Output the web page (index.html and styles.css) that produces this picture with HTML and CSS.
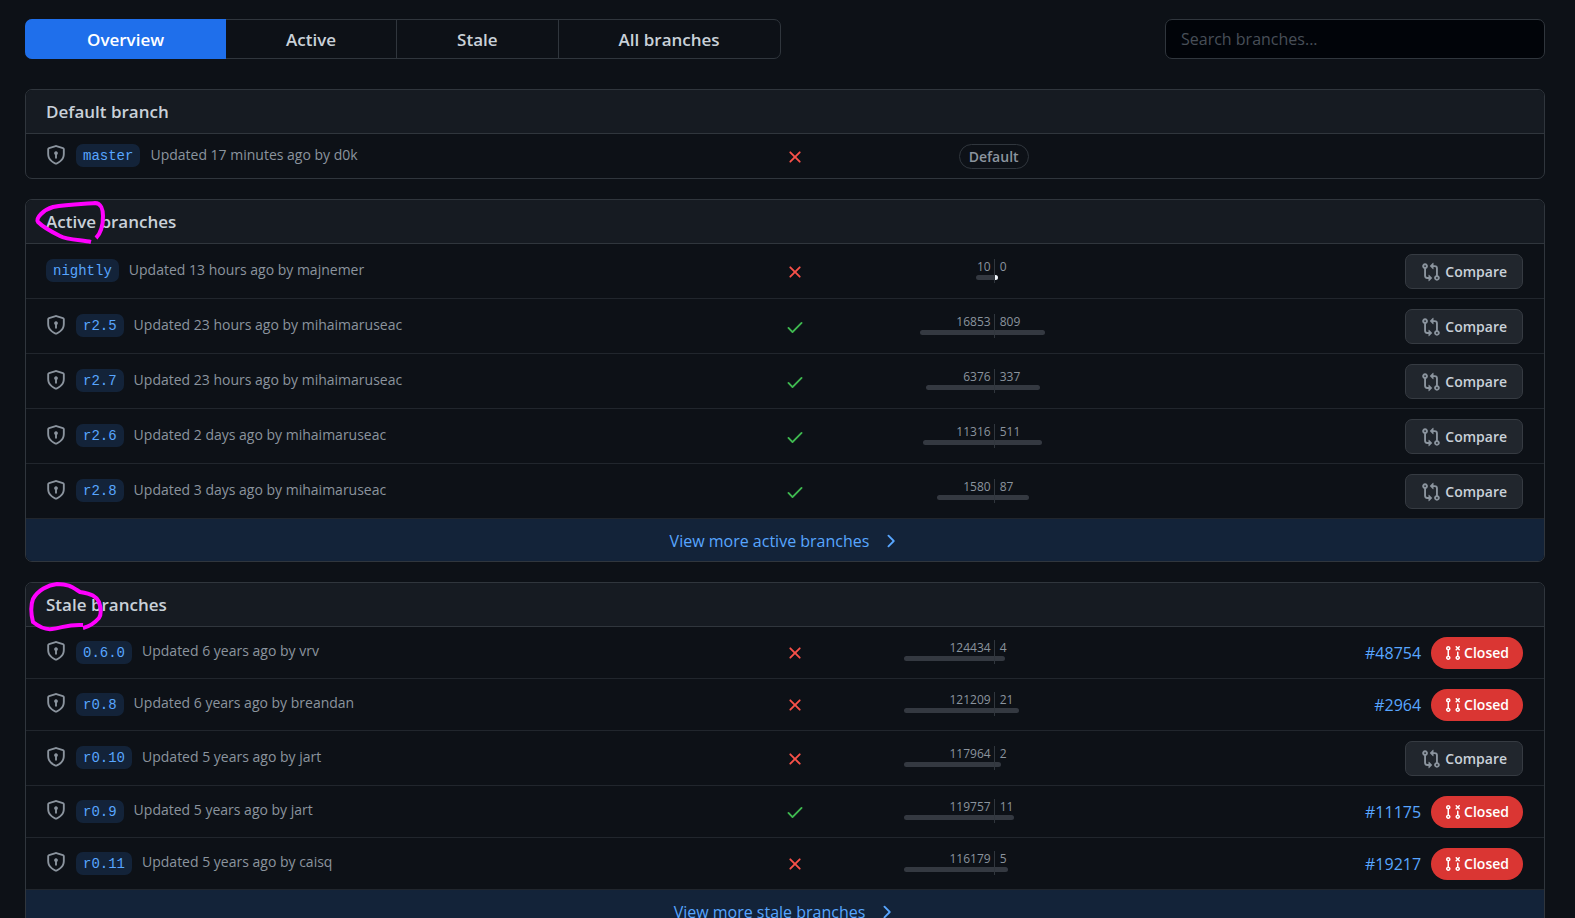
FILE: index.html
```html
<!DOCTYPE html>
<html lang="en">
<head>
  <meta charset="UTF-8">
  <meta name="viewport" content="width=device-width, initial-scale=1.0">
  <title>Branches</title>
  <link rel="stylesheet" href="styles.css">
</head>
<body>

  <!-- Icon sprite -->
  <svg class="sprite" aria-hidden="true">
    <symbol id="shield" viewBox="0 0 16 16"><path d="M7.467.133a1.75 1.75 0 011.066 0l5.25 1.68A1.75 1.75 0 0115 3.48V7c0 1.566-.32 3.182-1.303 4.682-.983 1.498-2.585 2.813-5.032 3.855a1.7 1.7 0 01-1.33 0c-2.447-1.042-4.049-2.357-5.032-3.855C1.32 10.182 1 8.566 1 7V3.48a1.75 1.75 0 011.217-1.667l5.25-1.68zm.61 1.429a.25.25 0 00-.153 0l-5.25 1.68a.25.25 0 00-.174.238V7c0 1.358.275 2.666 1.057 3.86.784 1.194 2.121 2.34 4.366 3.297a.2.2 0 00.154 0c2.245-.956 3.582-2.104 4.366-3.298C13.225 9.666 13.5 8.36 13.5 7V3.48a.25.25 0 00-.174-.237l-5.25-1.68zM9.5 6.5a1.5 1.5 0 01-.75 1.3v2.45a.75.75 0 01-1.5 0V7.8A1.5 1.5 0 119.5 6.5z"/></symbol>
    <symbol id="cross" viewBox="0 0 16 16"><path d="M3.72 3.72a.75.75 0 011.06 0L8 6.94l3.22-3.22a.75.75 0 111.06 1.06L9.06 8l3.22 3.22a.75.75 0 11-1.06 1.06L8 9.06l-3.22 3.22a.75.75 0 01-1.06-1.06L6.94 8 3.72 4.78a.75.75 0 010-1.06z"/></symbol>
    <symbol id="check" viewBox="0 0 16 16"><path d="M13.78 4.22a.75.75 0 010 1.06l-7.25 7.25a.75.75 0 01-1.06 0L2.22 9.28a.75.75 0 011.06-1.06L6 10.94l6.72-6.72a.75.75 0 011.06 0z"/></symbol>
    <symbol id="compare" viewBox="0 0 16 16"><path fill-rule="evenodd" d="M9.573.677L7.177 3.073a.25.25 0 000 .354l2.396 2.396A.25.25 0 0010 5.646V4h1a1 1 0 011 1v5.628a2.251 2.251 0 101.5 0V5A2.5 2.5 0 0011 2.5h-1V.854a.25.25 0 00-.427-.177zM6 12v-1.646a.25.25 0 01.427-.177l2.396 2.396a.25.25 0 010 .354l-2.396 2.396A.25.25 0 016 15.146V13.5H5A2.5 2.5 0 012.5 11V5.372a2.25 2.25 0 111.5 0V11a1 1 0 001 1h1zm6.75 0a.75.75 0 100 1.5.75.75 0 000-1.5zM4 3.25a.75.75 0 11-1.5 0 .75.75 0 011.5 0z"/></symbol>
    <symbol id="pr-closed" viewBox="0 0 16 16"><path fill-rule="evenodd" d="M10.72 1.227a.75.75 0 011.06 0l.97.97.97-.97a.75.75 0 111.06 1.061l-.97.97.97.97a.75.75 0 01-1.06 1.06l-.97-.97-.97.97a.75.75 0 11-1.06-1.06l.97-.97-.97-.97a.75.75 0 010-1.06zM12.75 6.5a.75.75 0 00-.75.75v3.378a2.251 2.251 0 101.5 0V7.25a.75.75 0 00-.75-.75zm0 5.5a.75.75 0 100 1.5.75.75 0 000-1.5zM2.5 3.25a.75.75 0 111.5 0 .75.75 0 01-1.5 0zM3.25 1a2.25 2.25 0 00-.75 4.372v5.256a2.251 2.251 0 101.5 0V5.372A2.25 2.25 0 003.25 1zm0 11a.75.75 0 100 1.5.75.75 0 000-1.5z"/></symbol>
    <symbol id="chevron" viewBox="0 0 16 16"><path d="M6.22 3.22a.75.75 0 011.06 0l4.25 4.25a.75.75 0 010 1.06l-4.25 4.25a.75.75 0 01-1.06-1.06L9.94 8 6.22 4.28a.75.75 0 010-1.06z"/></symbol>
  </svg>

  <header class="toolbar">
    <nav class="tabs">
      <a class="tab selected" href="#overview">Overview</a>
      <a class="tab" href="#active">Active</a>
      <a class="tab" href="#stale">Stale</a>
      <a class="tab" href="#all">All branches</a>
    </nav>
    <input class="search" type="search" placeholder="Search branches..." aria-label="Search branches">
  </header>

  <main>
    <section class="box">
      <h2 class="box-header">Default branch</h2>
      <ul class="branches">
        <li class="row">
          <div class="branch">
            <svg class="icon"><use href="#shield"/></svg>
            <a class="name" href="#master">master</a>
            <span class="updated">Updated 17 minutes ago by d0k</span>
          </div>
          <svg class="icon fail"><use href="#cross"/></svg>
          <div class="center"><span class="label">Default</span></div>
        </li>
      </ul>
    </section>

    <section class="box" id="active">
      <h2 class="box-header">Active branches
        <svg class="scribble" viewBox="26 194 90 56">
          <path d="M91 242C83 240 67 240 60 236C52 232 42 226 38 222Q36 219 41 214Q46 209 53 207C67 204 82 204 95 203C101 203 103 210 103 216C103 227 101 233 96 238"/>
        </svg>
      </h2>
      <ul class="branches">
        <li class="row">
          <div class="branch">
            <a class="name" href="#nightly">nightly</a>
            <span class="updated">Updated 13 hours ago by majnemer</span>
          </div>
          <svg class="icon fail"><use href="#cross"/></svg>
          <div class="divergence">
            <div class="behind"><span class="count">10</span><div class="bar" style="width: 19%"></div></div>
            <div class="ahead"><span class="count">0</span><div class="bar even" style="width: 4%"></div></div>
          </div>
          <div class="actions"><button class="btn" type="button"><svg class="icon"><use href="#compare"/></svg>Compare</button></div>
        </li>
        <li class="row">
          <div class="branch">
            <svg class="icon"><use href="#shield"/></svg>
            <a class="name" href="#r2.5">r2.5</a>
            <span class="updated">Updated 23 hours ago by mihaimaruseac</span>
          </div>
          <svg class="icon pass"><use href="#check"/></svg>
          <div class="divergence">
            <div class="behind"><span class="count">16853</span><div class="bar" style="width: 81%"></div></div>
            <div class="ahead"><span class="count">809</span><div class="bar" style="width: 56%"></div></div>
          </div>
          <div class="actions"><button class="btn" type="button"><svg class="icon"><use href="#compare"/></svg>Compare</button></div>
        </li>
        <li class="row">
          <div class="branch">
            <svg class="icon"><use href="#shield"/></svg>
            <a class="name" href="#r2.7">r2.7</a>
            <span class="updated">Updated 23 hours ago by mihaimaruseac</span>
          </div>
          <svg class="icon pass"><use href="#check"/></svg>
          <div class="divergence">
            <div class="behind"><span class="count">6376</span><div class="bar" style="width: 74%"></div></div>
            <div class="ahead"><span class="count">337</span><div class="bar" style="width: 50%"></div></div>
          </div>
          <div class="actions"><button class="btn" type="button"><svg class="icon"><use href="#compare"/></svg>Compare</button></div>
        </li>
        <li class="row">
          <div class="branch">
            <svg class="icon"><use href="#shield"/></svg>
            <a class="name" href="#r2.6">r2.6</a>
            <span class="updated">Updated 2 days ago by mihaimaruseac</span>
          </div>
          <svg class="icon pass"><use href="#check"/></svg>
          <div class="divergence">
            <div class="behind"><span class="count">11316</span><div class="bar" style="width: 78%"></div></div>
            <div class="ahead"><span class="count">511</span><div class="bar" style="width: 53%"></div></div>
          </div>
          <div class="actions"><button class="btn" type="button"><svg class="icon"><use href="#compare"/></svg>Compare</button></div>
        </li>
        <li class="row">
          <div class="branch">
            <svg class="icon"><use href="#shield"/></svg>
            <a class="name" href="#r2.8">r2.8</a>
            <span class="updated">Updated 3 days ago by mihaimaruseac</span>
          </div>
          <svg class="icon pass"><use href="#check"/></svg>
          <div class="divergence">
            <div class="behind"><span class="count">1580</span><div class="bar" style="width: 62%"></div></div>
            <div class="ahead"><span class="count">87</span><div class="bar" style="width: 38%"></div></div>
          </div>
          <div class="actions"><button class="btn" type="button"><svg class="icon"><use href="#compare"/></svg>Compare</button></div>
        </li>
      </ul>
      <a class="more" href="#active">View more active branches <svg class="icon"><use href="#chevron"/></svg></a>
    </section>

    <section class="box" id="stale">
      <h2 class="box-header">Stale branches
        <svg class="scribble" viewBox="26 577 90 56">
          <path d="M83 625C68 624 62 628 52 629C44 630 38 626 33 622C31 614 30 607 33 599C38 590 48 585 57 584C69 584 72 587 80 592C92 594 96 596 99 602C102 611 101 615 99 618Q92 626 83 628"/>
        </svg>
      </h2>
      <ul class="branches">
        <li class="row">
          <div class="branch">
            <svg class="icon"><use href="#shield"/></svg>
            <a class="name" href="#0.6.0">0.6.0</a>
            <span class="updated">Updated 6 years ago by vrv</span>
          </div>
          <svg class="icon fail"><use href="#cross"/></svg>
          <div class="divergence">
            <div class="behind"><span class="count">124434</span><div class="bar" style="width: 99%"></div></div>
            <div class="ahead"><span class="count">4</span><div class="bar" style="width: 12%"></div></div>
          </div>
          <div class="actions">
            <a class="pull" href="#48754">#48754</a>
            <a class="state" href="#48754"><svg class="icon"><use href="#pr-closed"/></svg>Closed</a>
          </div>
        </li>
        <li class="row">
          <div class="branch">
            <svg class="icon"><use href="#shield"/></svg>
            <a class="name" href="#r0.8">r0.8</a>
            <span class="updated">Updated 6 years ago by breandan</span>
          </div>
          <svg class="icon fail"><use href="#cross"/></svg>
          <div class="divergence">
            <div class="behind"><span class="count">121209</span><div class="bar" style="width: 99%"></div></div>
            <div class="ahead"><span class="count">21</span><div class="bar" style="width: 27%"></div></div>
          </div>
          <div class="actions">
            <a class="pull" href="#2964">#2964</a>
            <a class="state" href="#2964"><svg class="icon"><use href="#pr-closed"/></svg>Closed</a>
          </div>
        </li>
        <li class="row">
          <div class="branch">
            <svg class="icon"><use href="#shield"/></svg>
            <a class="name" href="#r0.10">r0.10</a>
            <span class="updated">Updated 5 years ago by jart</span>
          </div>
          <svg class="icon fail"><use href="#cross"/></svg>
          <div class="divergence">
            <div class="behind"><span class="count">117964</span><div class="bar" style="width: 98%"></div></div>
            <div class="ahead"><span class="count">2</span><div class="bar" style="width: 7%"></div></div>
          </div>
          <div class="actions"><button class="btn" type="button"><svg class="icon"><use href="#compare"/></svg>Compare</button></div>
        </li>
        <li class="row">
          <div class="branch">
            <svg class="icon"><use href="#shield"/></svg>
            <a class="name" href="#r0.9">r0.9</a>
            <span class="updated">Updated 5 years ago by jart</span>
          </div>
          <svg class="icon pass"><use href="#check"/></svg>
          <div class="divergence">
            <div class="behind"><span class="count">119757</span><div class="bar" style="width: 99%"></div></div>
            <div class="ahead"><span class="count">11</span><div class="bar" style="width: 21%"></div></div>
          </div>
          <div class="actions">
            <a class="pull" href="#11175">#11175</a>
            <a class="state" href="#11175"><svg class="icon"><use href="#pr-closed"/></svg>Closed</a>
          </div>
        </li>
        <li class="row">
          <div class="branch">
            <svg class="icon"><use href="#shield"/></svg>
            <a class="name" href="#r0.11">r0.11</a>
            <span class="updated">Updated 5 years ago by caisq</span>
          </div>
          <svg class="icon fail"><use href="#cross"/></svg>
          <div class="divergence">
            <div class="behind"><span class="count">116179</span><div class="bar" style="width: 98%"></div></div>
            <div class="ahead"><span class="count">5</span><div class="bar" style="width: 15%"></div></div>
          </div>
          <div class="actions">
            <a class="pull" href="#19217">#19217</a>
            <a class="state" href="#19217"><svg class="icon"><use href="#pr-closed"/></svg>Closed</a>
          </div>
        </li>
      </ul>
      <a class="more" href="#stale">View more stale branches <svg class="icon"><use href="#chevron"/></svg></a>
    </section>
  </main>

</body>
</html>
```

FILE: styles.css
```css
* {
  box-sizing: border-box;
  margin: 0;
  padding: 0;
}

body {
  background: #0d1117;
  color: #c9d1d9;
  font-family: "Segoe UI", "Open Sans", "Noto Sans", sans-serif;
  font-size: 16px;
  line-height: 24px;
  padding: 19px 30px 0 25px;
}

a {
  color: #58a6ff;
  text-decoration: none;
}

.sprite {
  display: none;
}

.icon {
  width: 20px;
  height: 20px;
  flex-shrink: 0;
  fill: #8b949e;
}

/* Tabs and search */
.toolbar {
  display: flex;
  justify-content: space-between;
  margin-bottom: 30px;
}

.tabs {
  display: flex;
  border: 1px solid #30363d;
  border-radius: 7px;
}

.tab {
  padding: 8px 60px 6px;
  border-right: 1px solid #30363d;
  color: #c9d1d9;
  font-size: 17px;
  font-weight: 600;
}

.tab:last-child {
  border-right: 0;
}

.tab.selected {
  margin: -1px 0 -1px -1px;
  padding: 9px 62px 7px;
  border-right: 0;
  border-radius: 7px 0 0 7px;
  background: #1f6feb;
  color: #fff;
}

.search {
  width: 380px;
  height: 40px;
  padding: 0 15px;
  background: #010409;
  border: 1px solid #30363d;
  border-radius: 7px;
  color: #c9d1d9;
  font: inherit;
}

.search::placeholder {
  color: #484f58;
}

/* Branch lists */
.box {
  margin-bottom: 20px;
  border: 1px solid #30363d;
  border-radius: 7px;
}

.box-header {
  position: relative;
  padding: 10px 20px 9px;
  background: #161b22;
  border-bottom: 1px solid #30363d;
  border-radius: 6px 6px 0 0;
  font-size: 17px;
  font-weight: 600;
}

.scribble {
  position: absolute;
  top: -6px;
  left: 0;
  width: 90px;
  height: 56px;
  fill: none;
  stroke: #f0f;
  stroke-width: 4;
}

.branches {
  list-style: none;
}

.row {
  display: grid;
  grid-template-columns: 50% 8% 182px 1fr;
  align-items: center;
  padding: 10px 21px 9px 20px;
}

.row + .row {
  border-top: 1px solid #21262d;
}

.branch {
  display: flex;
  align-items: center;
  gap: 10px;
  margin: -2px 0;
  padding-bottom: 4px;
}

.name {
  margin-top: 2px;
  padding: 2px 7px 0;
  background: rgba(56, 139, 253, 0.15);
  border-radius: 7px;
  font-family: Consolas, "Liberation Mono", monospace;
  font-size: 14px;
  line-height: 21px;
}

.updated {
  color: #8b949e;
  font-size: 14px;
  line-height: 20px;
}

.fail {
  fill: #f85149;
}

.pass {
  fill: #3fb950;
}

.center {
  display: flex;
  justify-content: center;
}

.label {
  padding: 0 9px;
  border: 1px solid #30363d;
  border-radius: 20px;
  color: #8b949e;
  font-size: 14px;
  font-weight: 600;
  line-height: 23px;
}

/* Commits behind / ahead of the default branch */
.divergence {
  display: grid;
  grid-template-columns: 1fr 1fr;
  margin-bottom: 2px;
  color: #8b949e;
  font-size: 12px;
  line-height: 16px;
}

.behind,
.ahead {
  display: flex;
  flex-direction: column;
  padding-bottom: 3px;
}

.behind {
  align-items: flex-end;
}

.ahead {
  border-left: 1px solid #30363d;
}

.count {
  padding: 0 3px 0 5px;
}

.bar {
  height: 5px;
  background: #343941;
}

.behind .bar {
  border-radius: 3px 0 0 3px;
}

.ahead .bar {
  border-radius: 0 3px 3px 0;
}

.bar.even {
  background: #f0f6fc;
}

.actions {
  display: flex;
  justify-content: flex-end;
  align-items: center;
  gap: 10px;
}

.btn {
  display: flex;
  align-items: center;
  gap: 4px;
  height: 35px;
  padding: 0 15px;
  background: #21262d;
  border: 1px solid #363b42;
  border-radius: 7px;
  color: #c9d1d9;
  font: inherit;
  font-size: 14px;
  font-weight: 600;
  cursor: pointer;
}

.state {
  display: flex;
  align-items: center;
  gap: 3px;
  padding: 0 14px;
  background: #da3633;
  border-radius: 20px;
  color: #fff;
  font-size: 14px;
  font-weight: 600;
  line-height: 32px;
}

.state .icon {
  width: 16px;
  height: 16px;
  fill: #fff;
}

.more {
  display: flex;
  justify-content: center;
  align-items: center;
  gap: 11px;
  padding: 10px 9px 8px;
  background: #132339;
  border-top: 1px solid #21262d;
  border-radius: 0 0 6px 6px;
}

.more .icon {
  fill: #58a6ff;
}
```
